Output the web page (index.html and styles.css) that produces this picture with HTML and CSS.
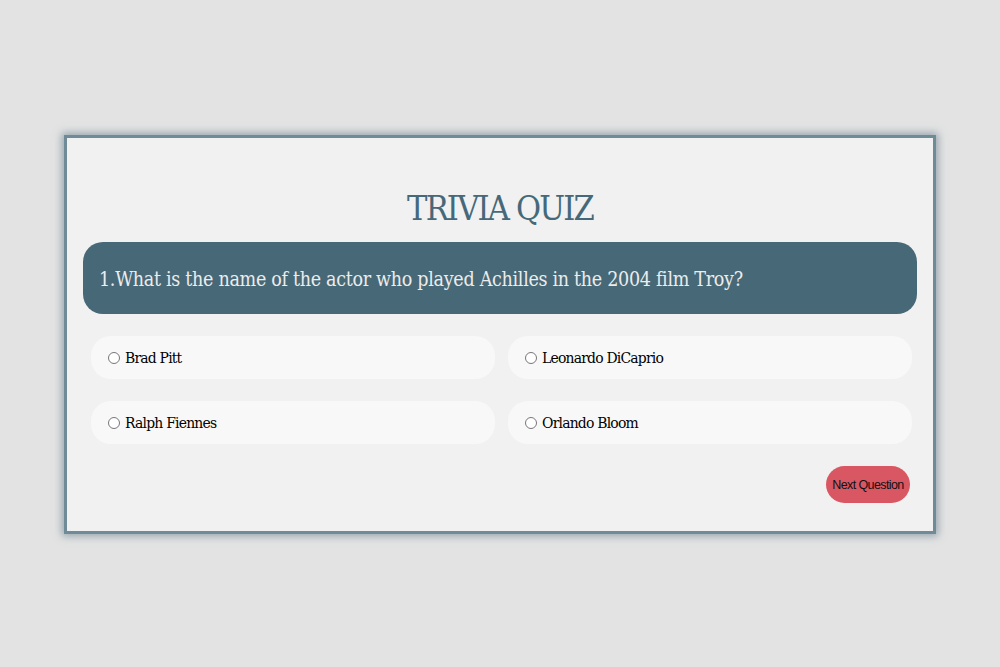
FILE: index.html
```html
<!DOCTYPE html>
<html>
<head>
<meta charset="utf-8">
<link rel="stylesheet" href="styles.css">
</head>
<body>
<div class="card">
  <h1 class="title">TRIVIA QUIZ</h1>
  <div class="question">1.What is the name of the actor who played Achilles in the 2004 film Troy?</div>
  <div class="options">
    <label class="option"><input type="radio" name="a"><span>Brad Pitt</span></label>
    <label class="option"><input type="radio" name="a"><span>Leonardo DiCaprio</span></label>
    <label class="option"><input type="radio" name="a"><span>Ralph Fiennes</span></label>
    <label class="option"><input type="radio" name="a"><span>Orlando Bloom</span></label>
  </div>
  <div class="actions"><button class="next">Next Question</button></div>
</div>
</body>
</html>
```
FILE: styles.css
```css
html, body { margin: 0; padding: 0; }
body {
  background: #e3e3e3;
  width: 1000px;
  height: 667px;
  overflow: hidden;
  font-family: "DejaVu Serif Condensed", "DejaVu Serif", serif;
  font-stretch: condensed;
}
.card {
  box-sizing: border-box;
  width: 872px;
  margin: 135px auto 0;
  height: 399px;
  background: #f1f1f1;
  border: 3px solid #6f8b98;
  box-shadow: 0 0 8px 2px rgba(80, 110, 125, 0.55);
  padding: 0 16px;
}
.title {
  margin: 47px 0 0;
  height: 57px;
  text-align: center;
  font-weight: normal;
  font-size: 34px;
  line-height: 46px;
  color: #46697a;
  letter-spacing: -1.8px;
}
.question {
  height: 72px;
  background: #476877;
  border-radius: 20px;
  color: #ececec;
  font-size: 19.5px;
  line-height: 76px;
  padding-left: 16px;
  letter-spacing: -0.3px;
}
.options {
  display: grid;
  grid-template-columns: 1fr 1fr;
  column-gap: 13px;
  row-gap: 22px;
  padding: 22px 5px 0 8px;
}
.option {
  display: flex;
  align-items: center;
  height: 43px;
  background: #f8f8f8;
  border-radius: 20px;
  padding-left: 17px;
  font-size: 15.5px;
  letter-spacing: -0.8px;
  color: #000;
}
.option span { padding-top: 1px; }
.option input {
  margin: 0 5px 0 0;
  width: 12px;
  height: 12px;
}
.actions {
  display: flex;
  justify-content: flex-end;
  padding: 22px 7px 0 0;
}
.next {
  width: 84px;
  height: 37px;
  border: none;
  border-radius: 19px;
  background: #d95763;
  color: #111;
  font-family: "Liberation Sans", Arial, sans-serif;
  font-size: 12.5px;
  letter-spacing: -0.6px;
  padding: 0;
}
```
